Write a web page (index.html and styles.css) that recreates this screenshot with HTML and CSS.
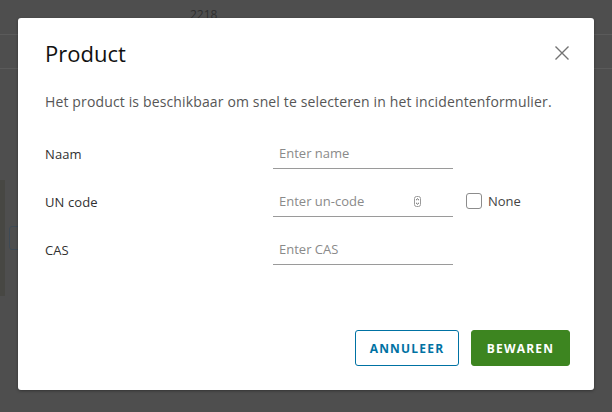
FILE: index.html
```html
<!DOCTYPE html>
<html>
<head>
<meta charset="utf-8">
<link rel="stylesheet" href="styles.css">
</head>
<body>
<div class="backdrop">
  <div class="bg-top"><span class="bg-num">2218</span></div>
  <div class="bg-row"></div>
  <div class="bg-side"><div class="bg-box"></div></div>
</div>
<div class="modal">
  <div class="modal-header">
    <h2 class="modal-title">Product</h2>
    <button class="close" aria-label="Sluiten">
      <svg width="16" height="16" viewBox="0 0 16 16"><path d="M1.5 1.5 L14.5 14.5 M14.5 1.5 L1.5 14.5" stroke="#737373" stroke-width="1.4" fill="none"/></svg>
    </button>
  </div>
  <p class="intro">Het product is beschikbaar om snel te selecteren in het incidentenformulier.</p>
  <form class="form">
    <div class="row">
      <label class="label">Naam</label>
      <div class="field"><span class="ph">Enter name</span></div>
    </div>
    <div class="row">
      <label class="label">UN code</label>
      <div class="field"><span class="ph">Enter un-code</span>
        <span class="spin"><svg width="7" height="11" viewBox="0 0 7 11"><rect x="0.5" y="0.5" width="6" height="10" rx="2" fill="none" stroke="#9a9a9a"/><path d="M2 4.2 L3.5 2.8 L5 4.2 M2 6.8 L3.5 8.2 L5 6.8" stroke="#555" stroke-width="0.9" fill="none"/></svg></span>
      </div>
      <div class="check"><span class="box"></span><span class="check-label">None</span></div>
    </div>
    <div class="row">
      <label class="label">CAS</label>
      <div class="field"><span class="ph">Enter CAS</span></div>
    </div>
  </form>
  <div class="footer">
    <button class="btn btn-outline">ANNULEER</button>
    <button class="btn btn-primary">BEWAREN</button>
  </div>
</div>
</body>
</html>
```
FILE: styles.css
```css
html, body {
  margin: 0;
  padding: 0;
  width: 612px;
  height: 412px;
  overflow: hidden;
  background: #4e4e4e;
  font-family: "Open Sans", "Lato", sans-serif;
}
body { position: relative; }
.backdrop {
  position: absolute;
  inset: 0;
}
.bg-top {
  height: 34px;
  border-bottom: 1px solid #5a5a5a;
  position: relative;
}
.bg-num {
  position: absolute;
  left: 190px;
  top: 6px;
  font-size: 12px;
  color: #2f2f2f;
}
.bg-row {
  height: 33px;
  border-bottom: 1px solid #5a5a5a;
}
.bg-side {
  position: absolute;
  left: 0;
  top: 180px;
  width: 5px;
  height: 116px;
  background: #474743;
}
.bg-box {
  position: absolute;
  left: 9px;
  top: 46px;
  width: 12px;
  height: 22px;
  border: 1px solid #3e4a55;
  border-radius: 3px;
}
.modal {
  position: absolute;
  left: 18px;
  top: 18px;
  width: 576px;
  height: 372px;
  background: #fff;
  border-radius: 3px;
  box-shadow: 0 1px 3px rgba(0,0,0,0.35);
  box-sizing: border-box;
  padding: 0 24px 0 27px;
  display: flex;
  flex-direction: column;
}
.modal-header {
  display: flex;
  justify-content: space-between;
  align-items: center;
  height: 70px;
}
.modal-title {
  margin: 0;
  font-weight: 400;
  font-size: 22px;
  color: #111;
}
.close {
  border: none;
  background: none;
  padding: 0;
  width: 16px;
  height: 16px;
  display: block;
}
.close svg { display: block; }
.intro {
  margin: 4px 0 0;
  font-size: 14px;
  color: #565656;
  line-height: 20px;
  letter-spacing: 0.14px;
}
.form {
  margin-top: 25px;
  display: flex;
  flex-direction: column;
  gap: 16px;
}
.row {
  display: flex;
  align-items: center;
  height: 32px;
}
.label {
  width: 228px;
  font-size: 13px;
  color: #313131;
  letter-spacing: 0.1px;
  padding-top: 1px;
}
.field {
  width: 180px;
  height: 32px;
  box-sizing: border-box;
  border-bottom: 1px solid #9a9a9a;
  display: flex;
  align-items: center;
  justify-content: space-between;
  padding: 1px 32px 0 6px;
}
.ph {
  font-size: 13px;
  color: #8a8a8a;
}
.spin svg { display: block; }
.check {
  display: flex;
  align-items: center;
  margin-left: 13px;
}
.box {
  width: 16px;
  height: 16px;
  border: 1px solid #8c8c8c;
  border-radius: 3px;
  box-sizing: border-box;
}
.check-label {
  margin-left: 6px;
  font-size: 13px;
  color: #444;
}
.footer {
  margin-top: auto;
  margin-bottom: 24px;
  display: flex;
  justify-content: flex-end;
  gap: 12px;
}
.btn {
  height: 36px;
  border-radius: 3px;
  font-family: "Open Sans", sans-serif;
  font-size: 12px;
  font-weight: 700;
  letter-spacing: 1.2px;
  padding: 0 12px;
  box-sizing: border-box;
}
.btn-outline {
  width: 104px;
  background: #fff;
  color: #0072a3;
  border: 1px solid #0072a3;
}
.btn-primary {
  width: 99px;
  background: #3d8520;
  color: #fff;
  border: 1px solid #3d8520;
}
```
